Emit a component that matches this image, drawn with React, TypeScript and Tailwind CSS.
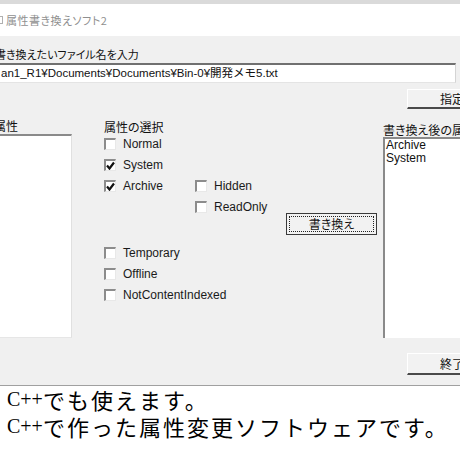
import React from 'react'

const ui = "font-['Liberation_Sans','Noto_Sans_CJK_JP',sans-serif]"
const jp = "font-['Noto_Sans_CJK_JP',sans-serif] [font-feature-settings:'palt']"

function Check({ label, checked = false, className = '' }: { label: string; checked?: boolean; className?: string }) {
  return (
    <div className={`flex items-center h-[21px] ${className}`}>
      <span className="w-[12px] h-[12px] shrink-0 bg-white border-t-2 border-l-2 border-t-[#8c8c8c] border-l-[#8c8c8c] border-r border-b border-r-[#e8e8e8] border-b-[#e8e8e8] flex items-center justify-center">
        {checked && (
          <svg width="9" height="9" viewBox="0 0 9 9">
            <polyline points="1,4.5 3.5,7.5 8,1.5" fill="none" stroke="#111" strokeWidth="2.2" />
          </svg>
        )}
      </span>
      <span className="ml-[7px] text-[12px] leading-[14px] text-[#1a1a1a] whitespace-nowrap">{label}</span>
    </div>
  )
}

function WinButton({ label, className = '' }: { label: string; className?: string }) {
  return (
    <div
      className={`w-[90px] bg-[#f2f2f2] border-t border-l border-t-white border-l-white border-r border-r-[#8a8a8a] border-b-2 border-b-[#4a4a4a] flex items-center justify-center text-[12px] text-[#111] ${jp} ${className}`}
    >
      {label}
    </div>
  )
}

export default function App() {
  return (
    <div className={`w-[460px] h-[460px] overflow-hidden bg-white flex flex-col ${ui}`}>
      {/* Title bar */}
      <div className="h-[4px] bg-[#dadada]" />
      <div className="h-[32px] bg-white flex items-center">
        <span className="w-[3px] h-[8px] border-y border-r border-[#b0b0b0]" />
        <span className={`ml-[3px] text-[11px] text-[#8f8f8f] tracking-[0.5px] ${jp}`}>属性書き換えソフト2</span>
      </div>

      {/* Dialog body */}
      <div className="h-[349px] bg-[#f0f0f0] flex flex-col">
        <div className={`mt-[12px] -ml-[5px] h-[12px] leading-[12px] text-[11px] text-[#111] whitespace-nowrap ${jp}`}>
          書き換えたいファイル名を入力
        </div>
        <div className="mt-[3px] w-[456px] h-[20px] bg-white border-t-2 border-t-[#707070] border-r border-r-[#d4d4d4] border-b border-b-[#e4e4e4] flex items-center pl-[1px] text-[11.5px] text-[#111] whitespace-nowrap overflow-hidden">
          an1_R1¥Documents¥Documents¥Bin-0¥開発メモ5.txt
        </div>
        <WinButton label="指定" className="mt-[6px] ml-[407px] h-[20px]" />

        <div className="mt-[11px] flex">
          {/* current attributes */}
          <div className="w-[72px] shrink-0 flex flex-col">
            <div className={`h-[14px] leading-[12px] -ml-[6px] text-[12px] text-[#111] ${jp}`}>属性</div>
            <div className="h-[204px] bg-white border-t-2 border-t-[#8a8a8a] border-r border-r-[#e0e0e0] border-b border-b-[#e6e6e6]" />
          </div>

          {/* attribute selection */}
          <div className="ml-[32px] w-[273px] shrink-0 flex flex-col pt-[1px]">
            <div className={`h-[12px] leading-[12px] text-[12px] text-[#111] whitespace-nowrap ${jp}`}>属性の選択</div>
            <Check label="Normal" />
            <Check label="System" checked />
            <div className="flex">
              <Check label="Archive" checked className="w-[91px]" />
              <Check label="Hidden" />
            </div>
            <div className="flex items-start">
              <Check label="ReadOnly" className="ml-[91px]" />
              <div className="ml-auto mt-[17px] w-[91px] h-[22px] bg-[#f2f2f2] border border-[#3a3a3a] p-[2px] flex">
                <div className={`flex-1 border border-dotted border-[#222] flex items-center justify-center text-[12px] text-[#111] ${jp}`}>
                  書き換え
                </div>
              </div>
            </div>
            <Check label="Temporary" className="mt-[7px]" />
            <Check label="Offline" />
            <Check label="NotContentIndexed" />
          </div>

          {/* attributes after rewrite */}
          <div className="ml-[6px] w-[100px] shrink-0 flex flex-col">
            <div className={`h-[17px] leading-[16px] pt-[2px] text-[12px] text-[#111] whitespace-nowrap ${jp}`}>書き換え後の属性</div>
            <div className="h-[201px] bg-white border-t-2 border-l-2 border-t-[#8a8a8a] border-l-[#8a8a8a] pl-[1px] text-[12px] leading-[13px] text-[#111]">
              <div>Archive</div>
              <div>System</div>
            </div>
          </div>
        </div>

        <WinButton label="終了" className="mt-[15px] ml-[407px] h-[22px]" />
      </div>

      {/* Caption */}
      <div className="h-px bg-[#a0a0a0]" />
      <div className="flex flex-col pl-[7px] text-black">
        <div className="h-[27px] flex items-center whitespace-nowrap leading-[27px]">
          <span className="font-['Liberation_Serif',serif] text-[20px]">C++</span>
          <span className="font-['Noto_Sans_CJK_JP',sans-serif] text-[22px] tracking-[2px]">でも使えます。</span>
        </div>
        <div className="h-[27px] flex items-center whitespace-nowrap leading-[27px]">
          <span className="font-['Liberation_Serif',serif] text-[20px]">C++</span>
          <span className="font-['Noto_Sans_CJK_JP',sans-serif] text-[22px] tracking-[2px]">で作った属性変更ソフトウェアです。</span>
        </div>
      </div>
    </div>
  )
}
